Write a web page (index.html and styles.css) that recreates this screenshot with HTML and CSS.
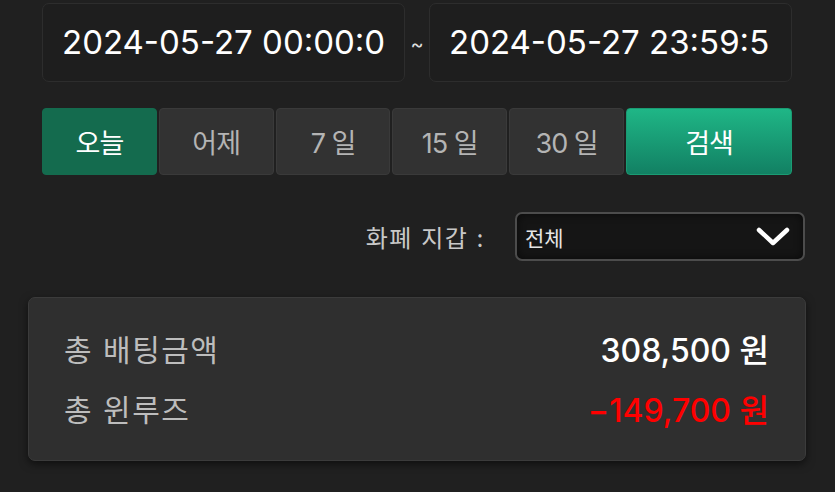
FILE: index.html
```html
<!DOCTYPE html>
<html lang="ko">
<head>
<meta charset="utf-8">
<link rel="stylesheet" href="styles.css">
</head>
<body>
<div class="page">
  <div class="dates">
    <div class="date-input">2024-05-27 00:00:0</div>
    <span class="tilde">~</span>
    <div class="date-input">2024-05-27 23:59:5</div>
  </div>
  <div class="ranges">
    <button class="rbtn active">오늘</button>
    <button class="rbtn">어제</button>
    <button class="rbtn">7 일</button>
    <button class="rbtn">15 일</button>
    <button class="rbtn">30 일</button>
    <button class="rbtn search">검색</button>
  </div>
  <div class="wallet">
    <span class="wallet-label">화폐 지갑 :</span>
    <div class="select">
      <span>전체</span>
      <svg class="chev" width="34" height="20" viewBox="0 0 34 20"><path d="M3 3 L17 16 L31 3" fill="none" stroke="#fff" stroke-width="4.5" stroke-linecap="round" stroke-linejoin="round"/></svg>
    </div>
  </div>
  <div class="card">
    <div class="row"><span class="lbl">총 배팅금액</span><span class="val">308,500 원</span></div>
    <div class="row"><span class="lbl">총 윈루즈</span><span class="val neg">−149,700 원</span></div>
  </div>
</div>
</body>
</html>
```
FILE: styles.css
```css
* { box-sizing: border-box; }
html, body { margin: 0; padding: 0; }
body {
  background: #202020;
  font-family: "Inter", "Noto Sans CJK KR", sans-serif;
  width: 835px;
  height: 492px;
  overflow: hidden;
}
.page {
  padding: 3px 0 0 0;
}
.dates {
  display: flex;
  align-items: center;
  margin-left: 42px;
  width: 750px;
}
.date-input {
  width: 363px;
  height: 79px;
  border: 1.5px solid #2d2d2d;
  border-radius: 7px;
  background: #1e1e1e;
  color: #fff;
  font-size: 33px;
  display: flex;
  align-items: center;
  padding-left: 19px;
  padding-bottom: 1px;
  white-space: nowrap;
  overflow: hidden;
  letter-spacing: 0;
}
.tilde {
  width: 24px;
  text-align: center;
  color: #ddd;
  font-size: 20px;
  padding-top: 2px;
}
.ranges {
  display: grid;
  grid-template-columns: repeat(5, 1fr) 166px;
  gap: 2px;
  margin: 26px 0 0 42px;
  width: 750px;
  height: 67px;
}
.rbtn {
  font-family: "Inter", "Noto Sans CJK KR", sans-serif;
  font-size: 27px;
  color: #b4b4b4;
  background: #323232;
  border: 1px solid #3a3a3a;
  border-radius: 4px;
  padding: 0;
  letter-spacing: -1px;
}
.rbtn.active {
  background: #146b4e;
  border-color: #146b4e;
  color: #fff;
}
.rbtn.search {
  background: linear-gradient(#1fb686, #128063);
  border-color: #1a9c73;
  color: #fff;
}
.wallet {
  display: flex;
  align-items: center;
  justify-content: flex-end;
  width: 805px;
  margin-top: 37px;
  gap: 30px;
}
.wallet-label {
  color: #c8c8c8;
  font-size: 24px;
  letter-spacing: 1.5px;
}
.select {
  width: 290px;
  height: 49px;
  border: 2px solid #4c4c4c;
  border-radius: 7px;
  background: #151515;
  box-shadow: inset 0 0 8px rgba(0,0,0,0.6);
  display: flex;
  align-items: center;
  justify-content: space-between;
  padding: 0 13px 0 8px;
  color: #e6e6e6;
  font-size: 21px;
}
.chev { display: block; }
.card {
  margin: 36px 0 0 28px;
  width: 778px;
  height: 164px;
  background: #2f2f2f;
  border: 1px solid #3b3b3b;
  border-radius: 7px;
  box-shadow: 0 3px 8px rgba(0,0,0,0.55);
  padding: 20px 36px 0 35px;
}
.row {
  display: flex;
  justify-content: space-between;
  align-items: center;
  height: 60px;
}
.lbl {
  color: #bdbdbd;
  font-size: 30px;
  letter-spacing: 1.5px;
}
.val {
  color: #fff;
  font-size: 32px;
  font-weight: 500;
  letter-spacing: 0;
}
.val.neg { color: #ff0000; }
```
